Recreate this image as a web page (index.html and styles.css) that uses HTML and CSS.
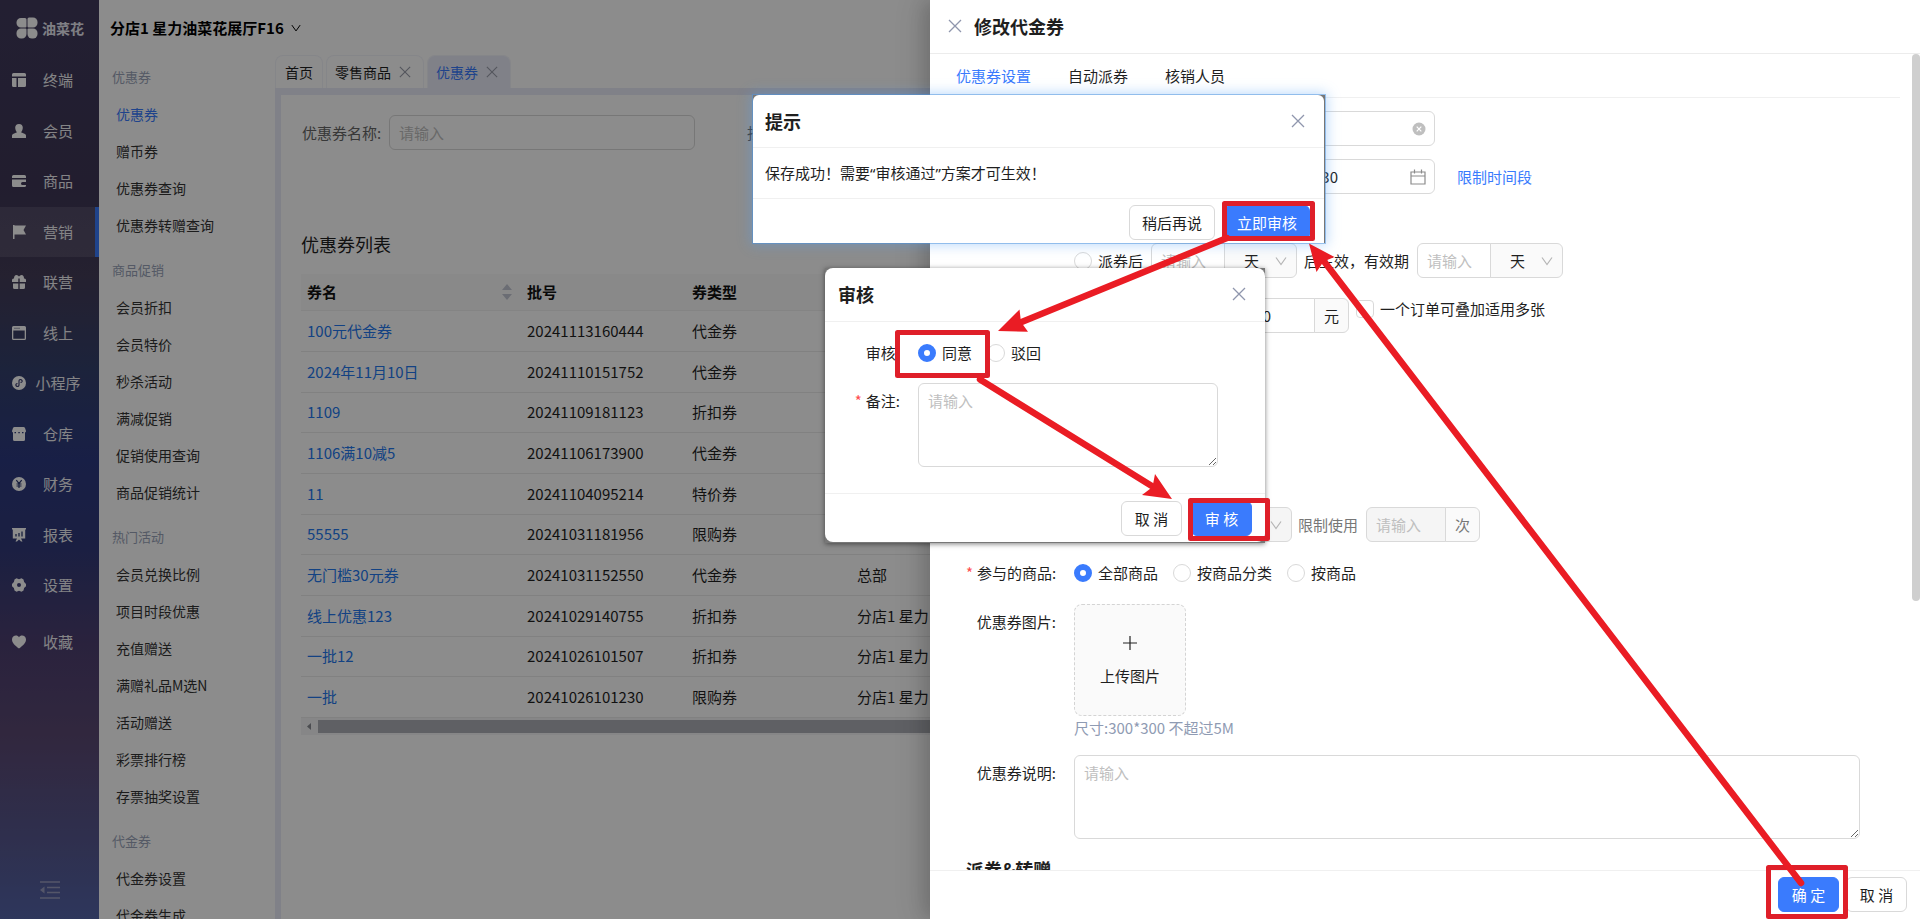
FILE: index.html
```html
<!DOCTYPE html>
<html lang="zh-CN">
<head>
<meta charset="utf-8">
<title>优惠券</title>
<link rel="stylesheet" href="styles.css">
</head>
<body>
<svg class="defs" aria-hidden="true">
  <symbol id="close" viewBox="0 0 14 14"><path d="M1 1l12 12M13 1L1 13" fill="none" stroke="currentColor" stroke-width="1.3"/></symbol>
  <symbol id="down" viewBox="0 0 12 12"><path d="M1 2.500l5 7 5-7" fill="none" stroke="currentColor" stroke-width="1.2"/></symbol>
</svg>
<div class="app">
  <aside class="sidebar">
    <div class="logo">
      <svg width="22" height="22" viewBox="0 0 22 22" fill="#fff"><path d="M5 1h4q1.500 0 1.500 1.500V9.500q0 1-1 1H5a4.500 4.500 0 0 1-4.500-4.500v-.5A4.500 4.500 0 0 1 5 1z"/><path d="M13 .5h4A4.500 4.500 0 0 1 21.500 5v1a4.500 4.500 0 0 1-4.500 4.500h-4.500q-1 0-1-1V2q0-1.500 1.500-1.500z"/><path d="M5 11.500h4.500q1 0 1 1V17a4.500 4.500 0 0 1-4.500 4.500H5A4.500 4.500 0 0 1 .5 17v-1A4.500 4.500 0 0 1 5 11.500z"/><path d="M12.500 11.500H17a4.500 4.500 0 0 1 4.500 4.500v1a4.500 4.500 0 0 1-4.500 4.500h-1a4.500 4.500 0 0 1-4.500-4.500v-4.500q0-1 1-1z"/></svg>
      <span>油菜花</span>
    </div>
    <nav class="nav">
      <a href="#"><svg viewBox="0 0 14 14"><path d="M1.500 0h11Q14 0 14 1.500V3.500H0V1.500Q0 0 1.500 0zM0 5h4.500v9h-3Q0 14 0 12.500zM6 5h8v7.500q0 1.500-1.500 1.500H6z"/></svg><span>终端</span></a>
      <a href="#"><svg viewBox="0 0 14 14"><path d="M7 0a3.800 3.800 0 0 1 3.800 3.800C10.800 6 9.500 8 9 8.300L13 10q1 .5 1 1.500V14H0v-2.500q0-1 1-1.500l4-1.700C4.500 8 3.200 6 3.200 3.800A3.800 3.800 0 0 1 7 0z"/></svg><span>会员</span></a>
      <a href="#"><svg viewBox="0 0 14 14"><path d="M1.500 1h11Q14 1 14 2.500V4H0V2.500Q0 1 1.500 1zM0 5.500h14V8h-3.500a1.500 1.500 0 0 0 0 3H14v.5q0 1.500-1.500 1.500h-11Q0 13 0 11.500z"/></svg><span>商品</span></a>
      <a href="#" class="on"><svg viewBox="0 0 14 14"><path d="M1 0h1.500v.5H14L11.500 5 14 9.500H2.500V14H1z"/></svg><span>营销</span></a>
      <a href="#"><svg viewBox="0 0 14 14"><path d="M6.300 3.500V7H0V5q0-1.500 1.500-1.500H2Q2 0 4.500 0 6 0 7 1.500 8 0 9.500 0 12 0 12 3.500h.5Q14 3.500 14 5v2H7.700V3.500zM1 8.500h5.300V14H2.500Q1 14 1 12.500zM7.700 8.500H13v4q0 1.500-1.500 1.500H7.700z"/></svg><span>联营</span></a>
      <a href="#"><svg viewBox="0 0 14 14"><path fill-rule="evenodd" d="M1.500 0h11Q14 0 14 1.500v11q0 1.500-1.500 1.500h-11Q0 14 0 12.500v-11Q0 0 1.500 0zM1.300 4.500v8.200h11.400V4.500zM2.500 1.700v1h1v-1zM4.500 1.700v1h1v-1zM6.500 1.700v1h1v-1z"/></svg><span>线上</span></a>
      <a href="#"><svg viewBox="0 0 14 14"><circle cx="7" cy="7" r="7"/><path d="M7 8.800c0 3-4 1.500-3-.5.400-.7 1.500-.8 1.500-.8M7 8.800V5.200c0-3 4-1.500 3 .5-.4.700-1.500.8-1.500.8" fill="none" stroke="#3e4070" stroke-width="1.200"/></svg><span>小程序</span></a>
      <a href="#"><svg viewBox="0 0 14 14"><path fill-rule="evenodd" d="M2.500 0h9Q12.500 0 13 1l1 3q0 1-1 1.500v7q0 1.500-1.500 1.500h-9Q1 14 1 12.500v-7Q0 5 0 4l1-3Q1.500 0 2.500 0zM2.500 5v1.200H4V5zM6.300 5v1.200h1.500V5zM10 5v1.200h1.500V5z"/></svg><span>仓库</span></a>
      <a href="#"><svg viewBox="0 0 14 14"><circle cx="7" cy="7" r="7"/><path d="M4.300 3.200L7 6.500l2.700-3.300M7 6.500V11M4.500 7h5M4.500 9h5" fill="none" stroke="#2c3a72" stroke-width="1.200"/></svg><span>财务</span></a>
      <a href="#"><svg viewBox="0 0 14 14"><path d="M0 0h14v1.500h-.8V10.500H9l1.500 3H9L7 11.500 5 13.500H3.500l1.500-3H.8V1.500H0z"/><path d="M4 8.500V6M7 8.500V5M10 8.500V3.500" stroke="#2c3a72" stroke-width="1.300"/></svg><span>报表</span></a>
      <a href="#"><svg viewBox="0 0 14 14"><path fill-rule="evenodd" d="M4.500.3L7 1.200 9.500.3l2 1.200.6 2.500L14 6v2.200l-1.900 1.800-.6 2.500-2 1.200L7 12.800l-2.500.9-2-1.200L1.900 10 0 8.200V6l1.900-2 .6-2.500zM7 5a2 2 0 1 0 0 4 2 2 0 0 0 0-4z"/></svg><span>设置</span></a>
      <a href="#" class="fav"><svg viewBox="0 0 14 14"><path d="M7 13.500C3 10.500 0 8 0 4.500 0 0 5.500-.8 7 2.200 8.500-.8 14 0 14 4.500 14 8 11 10.500 7 13.500z"/></svg><span>收藏</span></a>
    </nav>
    <button class="fold" aria-label="收起菜单"><svg width="20" height="18" viewBox="0 0 20 18"><path d="M0 1h20M7 6.500h13M7 11.500h13M0 17h20" stroke="currentColor" stroke-width="1.500"/><path d="M4.500 5.500v7L0 9z" fill="currentColor"/></svg></button>
  </aside>
  <div class="main">
    <header class="topbar"><button class="store">分店1 星力油菜花展厅F16 <svg width="10" height="10"><use href="#down"/></svg></button></header>
    <div class="work">
      <nav class="submenu">
        <h3>优惠券</h3>
        <a href="#" class="on">优惠券</a><a href="#">赠币券</a><a href="#">优惠券查询</a><a href="#">优惠券转赠查询</a>
        <h3>商品促销</h3>
        <a href="#">会员折扣</a><a href="#">会员特价</a><a href="#">秒杀活动</a><a href="#">满减促销</a><a href="#">促销使用查询</a><a href="#">商品促销统计</a>
        <h3>热门活动</h3>
        <a href="#">会员兑换比例</a><a href="#">项目时段优惠</a><a href="#">充值赠送</a><a href="#">满赠礼品M选N</a><a href="#">活动赠送</a><a href="#">彩票排行榜</a><a href="#">存票抽奖设置</a>
        <h3>代金券</h3>
        <a href="#">代金券设置</a><a href="#">代金券生成</a>
      </nav>
      <div class="content">
        <div class="pagetabs">
          <span class="ptab">首页</span>
          <span class="ptab">零售商品<svg width="12" height="12"><use href="#close"/></svg></span>
          <span class="ptab on">优惠券<svg width="12" height="12"><use href="#close"/></svg></span>
        </div>
        <section class="card">
          <form class="search">
            <label for="q-name">优惠券名称:</label><input id="q-name" class="input" placeholder="请输入">
            <label for="q-batch" class="second">批号:</label>
          </form>
          <h2>优惠券列表</h2>
          <div class="tablebox">
            <table>
              <thead><tr><th class="c1"><div class="sorthead">券名<svg width="10" height="16" viewBox="0 0 10 16" fill="#c3c7d3"><path d="M5 0l5 6H0zM5 16l5-6H0z"/></svg></div></th><th class="c2">批号</th><th class="c2">券类型</th><th></th></tr></thead>
              <tbody>
                <tr><td><a href="#">100元代金券</a></td><td>20241113160444</td><td>代金券</td><td></td></tr>
                <tr><td><a href="#">2024年11月10日</a></td><td>20241110151752</td><td>代金券</td><td></td></tr>
                <tr><td><a href="#">1109</a></td><td>20241109181123</td><td>折扣券</td><td></td></tr>
                <tr><td><a href="#">1106满10减5</a></td><td>20241106173900</td><td>代金券</td><td></td></tr>
                <tr><td><a href="#">11</a></td><td>20241104095214</td><td>特价券</td><td></td></tr>
                <tr><td><a href="#">55555</a></td><td>20241031181956</td><td>限购券</td><td></td></tr>
                <tr><td><a href="#">无门槛30元券</a></td><td>20241031152550</td><td>代金券</td><td>总部</td></tr>
                <tr><td><a href="#">线上优惠123</a></td><td>20241029140755</td><td>折扣券</td><td>分店1 星力</td></tr>
                <tr><td><a href="#">一批12</a></td><td>20241026101507</td><td>折扣券</td><td>分店1 星力</td></tr>
                <tr><td><a href="#">一批</a></td><td>20241026101230</td><td>限购券</td><td>分店1 星力</td></tr>
              </tbody>
            </table>
            <div class="hscroll"><svg width="17" height="17" viewBox="0 0 17 17"><path d="M10 5v7L6 8.500z" fill="#8a8d94"/></svg><div class="hthumb"></div></div>
          </div>
        </section>
      </div>
    </div>
  </div>
</div>
<div class="mask"></div>

<section class="drawer">
  <header class="dhead"><button class="x" aria-label="关闭"><svg width="14" height="14"><use href="#close"/></svg></button><h1>修改代金券</h1></header>
  <div class="dbody">
    <nav class="dtabs"><a href="#" class="on">优惠券设置</a><a href="#">自动派券</a><a href="#">核销人员</a></nav>
    <form class="form">
      <div class="row"><span></span><div class="ctl"><div class="field w361"><input class="input" aria-label="名称"><svg class="ficon" width="14" height="14" viewBox="0 0 14 14"><circle cx="7" cy="7" r="6.500" fill="#bfbfbf"/><path d="M4.700 4.700l4.600 4.600M9.300 4.700L4.700 9.300" stroke="#fff" stroke-width="1.200"/></svg></div></div></div>
      <div class="row"><span></span><div class="ctl"><div class="field w361"><input class="input date" aria-label="结束日期" value="30"><svg class="ficon" width="16" height="16" viewBox="0 0 16 16" fill="none" stroke="#8c8c8c" stroke-width="1.200"><path d="M1 3h14v12H1zM1 7h14M4.500 .5v4M11.500 .5v4"/></svg></div><a href="#" class="limit">限制时间段</a></div></div>
      <div class="row r-valid"><span></span><div class="ctl">
        <label class="opt"><input type="radio" name="valid">派券后</label>
        <div class="combo"><input class="input w74" placeholder="请输入" aria-label="天数"><div class="sel"><select aria-label="单位"><option>天</option></select><svg width="12" height="12"><use href="#down"/></svg></div></div>
        <span class="mid">后生效，有效期</span>
        <div class="combo"><input class="input w74" placeholder="请输入" aria-label="有效期"><div class="sel"><select aria-label="有效期单位"><option>天</option></select><svg width="12" height="12"><use href="#down"/></svg></div></div>
      </div></div>
      <div class="row r-money"><span></span><div class="ctl">
        <div class="combo"><input class="input money" value="0" aria-label="金额"><span class="addon">元</span></div>
        <label class="opt stack"><input type="checkbox">一个订单可叠加适用多张</label>
      </div></div>
      <div class="row r-limit"><span></span><div class="ctl muted">
        <div class="sel wide"><select disabled aria-label="周期"><option></option></select><svg width="12" height="12"><use href="#down"/></svg></div>
        <label for="times">限制使用</label>
        <div class="combo"><input id="times" class="input w80" placeholder="请输入" disabled><span class="addon">次</span></div>
      </div></div>
      <div class="row r-goods"><span class="lab req">参与的商品:</span><div class="ctl radios">
        <label class="opt"><input type="radio" name="goods" checked>全部商品</label>
        <label class="opt"><input type="radio" name="goods">按商品分类</label>
        <label class="opt"><input type="radio" name="goods">按商品</label>
      </div></div>
      <div class="row"><span class="lab">优惠券图片:</span><div>
        <button type="button" class="upload"><svg width="14" height="14" viewBox="0 0 14 14"><path d="M7 0v14M0 7h14" stroke="#222" stroke-width="1.200"/></svg>上传图片</button>
        <p class="hint">尺寸:300*300 不超过5M</p>
      </div></div>
      <div class="row"><label class="lab" for="desc">优惠券说明:</label><textarea id="desc" placeholder="请输入"></textarea></div>
      <h2 class="sect">派券&amp;转赠</h2>
    </form>
    <div class="vthumb"></div>
  </div>
  <footer class="dfoot"><button class="btn primary">确 定</button><button class="btn">取 消</button></footer>
</section>

<section class="modal notice" role="dialog" aria-labelledby="t1">
  <div class="panel">
    <header class="mhead"><h2 id="t1">提示</h2><button class="x" aria-label="关闭"><svg width="14" height="14"><use href="#close"/></svg></button></header>
    <p class="msg">保存成功！需要“审核通过”方案才可生效！</p>
    <footer class="mfoot"><button class="btn">稍后再说</button><button class="btn primary">立即审核</button></footer>
  </div>
</section>

<section class="modal audit" role="dialog" aria-labelledby="t2">
  <div class="panel">
    <header class="mhead"><h2 id="t2">审核</h2><button class="x" aria-label="关闭"><svg width="14" height="14"><use href="#close"/></svg></button></header>
    <form class="mbody">
      <span class="lab">审核:</span><div class="ctl radios">
        <label class="opt"><input type="radio" name="audit" checked>同意</label>
        <label class="opt"><input type="radio" name="audit">驳回</label>
      </div>
      <label class="lab req" for="remark">备注:</label><textarea id="remark" placeholder="请输入"></textarea>
    </form>
    <footer class="mfoot"><button class="btn">取 消</button><button class="btn primary">审 核</button></footer>
  </div>
</section>

<svg class="marks" width="1920" height="919" aria-hidden="true">
  <g fill="none" stroke="#df1f29" stroke-width="5" stroke-linejoin="round">
    <path d="M1224.500 203.500h88v35h-88z"/><path d="M897.500 332.500h90v43h-90z"/><path d="M1190.500 500.500h77v38h-77z"/><path d="M1768.500 867.500h77v49h-77z"/>
  </g>
  <g fill="none" stroke="#ea1c24" stroke-width="6.500" stroke-linecap="round">
    <path d="M1227 238L1018 323.500"/><path d="M980 379.500L1155 488"/><path d="M1801 883L1323 260"/>
  </g>
  <g fill="#ea1c24"><path d="M998 331l21.500-21.500 1.500 12.500 7 9.700z"/><path d="M1172 499l-17-25-2.500 13-10.500 8z"/><path d="M1309 243.500l25.500 13.500-11 4.500-7 10.500z"/></g>
</svg>
</body>
</html>
```
FILE: styles.css
```css
* { box-sizing: border-box; margin: 0; }
html, body { height: 100%; overflow: hidden; }
body { position: relative; font: 15px/24px "Noto Sans CJK SC", sans-serif; color: #1f1f1f; background: #fff; }
a { color: inherit; text-decoration: none; }
button, input, textarea, select { font: inherit; color: inherit; }
button { border: 0; padding: 0; background: none; }
svg { display: block; flex: none; }
.defs { position: absolute; width: 0; height: 0; }

.app { display: flex; height: 100%; }
.sidebar { width: 99px; flex: none; display: flex; flex-direction: column; color: #f0f0f4;
  background: linear-gradient(180deg, #403a5c 0%, #3e3656 20%, #443c58 30%, #34406c 40%, #2d3a80 50%, #323a78 60%, #4d3f70 70%, #5a4872 80%, #565890 92%, #5464a8 100%); }
.logo { display: flex; align-items: center; gap: 4px; height: 55px; padding-left: 16px; font-size: 14px; font-weight: 700; }
.logo span { color: #e8e8f2; }
.nav { display: flex; flex-direction: column; justify-content: space-between; height: 612px; }
.nav a { display: flex; align-items: center; gap: 9px; height: 50px; padding-left: 12px; }
.nav svg { width: 14px; height: 14px; fill: #fff; }
.nav span { width: 46px; text-align: center; white-space: nowrap; }
.nav .on { background: rgba(255,255,255,.1); border-right: 4px solid #3a7bfd; }
.nav .fav { margin-top: 6px; }
.fold { margin: auto auto 20px; color: #9a9dc0; }

.main { flex: 1; min-width: 0; display: flex; flex-direction: column; }
.topbar { height: 55px; display: flex; align-items: center; padding-left: 11px; }
.store { display: flex; align-items: center; gap: 7px; font-weight: 700; color: #000; }
.work { flex: 1; min-height: 0; display: flex; }
.submenu { width: 176px; flex: none; padding-top: 4px; overflow: hidden; font-size: 14px; line-height: 37px; color: #333; }
.submenu h3 { padding: 0 0 2px 13px; font-size: 13px; line-height: 35px; font-weight: 400; color: #99a3b8; }
.submenu a { display: block; padding-left: 17px; }
.submenu a + h3 { margin-top: 8px; }
.submenu .on { color: #3a7bfd; }

.content { flex: 1; min-width: 0; display: flex; flex-direction: column; }
.pagetabs { display: flex; gap: 3px; height: 33px; }
.ptab { display: flex; align-items: center; gap: 8px; padding: 0 12px 0 8px; font-size: 14px; border: 1px solid #f3f4fa; border-bottom: 0; border-radius: 8px 8px 0 0; }
.ptab svg { color: #9a9dab; }
.ptab:first-child { padding: 0 9px; }
.ptab.on { background: #eaecf8; color: #3a7bfd; }
.card { flex: 1; border: solid #eaecf8; border-width: 7px 0 0 6px; padding: 20px 0 0 20px; }
.search { display: flex; align-items: center; color: #666; }
.search label { width: 88px; padding-left: 1px; white-space: nowrap; flex: none; }
.search .second { margin-left: 51px; width: 50px; }
.search .input { width: 306px; }
.input { height: 35px; border: 1px solid #d9d9d9; border-radius: 6px; padding: 0 9px; background: #fff; outline: 0; }
::placeholder { color: #bfbfbf; opacity: 1; }
.card h2 { margin-top: 80px; font-size: 18px; line-height: 28px; font-weight: 400; }
.tablebox { margin-top: 16px; }
table { width: 100%; border-collapse: collapse; table-layout: fixed; }
th { height: 36px; padding: 0 6px; text-align: left; background: #fafafa; border-bottom: 1px solid #f0f0f0; color: #111; }
td { height: 41px; padding: 0 6px; border-bottom: 1px solid #ebebeb; white-space: nowrap; }
tr:nth-child(3n) td { height: 40px; }
.c1 { width: 220px; }
.c2 { width: 165px; }
.sorthead { display: flex; justify-content: space-between; align-items: center; padding-right: 3px; }
td a { color: #2478ee; }
.hscroll { display: flex; align-items: center; height: 17px; background: #f4f4f6; }
.hthumb { flex: 1; height: 13px; background: #adb0b6; }

.mask { position: absolute; inset: 0; background: rgba(0,0,0,.45); }

.drawer { position: absolute; top: 0; right: 0; bottom: 0; width: 990px; display: flex; flex-direction: column; background: #fff; box-shadow: -6px 0 16px rgba(0,0,0,.12), -9px 0 28px rgba(0,0,0,.1); }
.dhead { display: flex; align-items: center; gap: 12px; height: 54px; padding: 0 0 1px 18px; border-bottom: 1px solid #ececec; }
.dhead h1 { font-size: 18px; }
.x { color: #8f96ad; }
.dbody { position: relative; flex: 1; min-height: 0; overflow: hidden; }
.dtabs { display: flex; gap: 37px; height: 44px; margin-right: 20px; padding-left: 26px; line-height: 44px; border-bottom: 1px solid #f0f0f0; }
.dtabs .on { color: #3a7bfd; }
.form { display: flex; flex-direction: column; gap: 13px; padding: 13px 60px 0 36px; }
.row { display: grid; grid-template-columns: 94px 1fr; column-gap: 14px; align-items: start; }
.lab { padding-right: 4px; line-height: 35px; text-align: right; white-space: nowrap; }
.req::before { content: "*"; color: #ff4d4f; margin-right: 4px; }
.ctl { display: flex; align-items: center; height: 35px; white-space: nowrap; }
.field { position: relative; display: flex; }
.w361 { width: 361px; }
.field .input { width: 100%; }
.field .date { text-align: right; padding-right: 96px; }
.ficon { position: absolute; right: 9px; top: 50%; translate: 0 -50%; }
.limit { margin-left: 22px; color: #3a7bfd; }
.r-valid { margin-top: 36px; }
.r-money { margin-top: 7px; }
.r-limit { margin-top: 161px; }
.opt { display: flex; align-items: center; gap: 6px; }
input[type=radio], input[type=checkbox] { appearance: none; width: 18px; height: 18px; margin: 0; border: 1px solid #d9d9d9; border-radius: 50%; background: #fff; }
input[type=checkbox] { border-radius: 4px; }
input[type=radio]:checked { border: 6px solid #3a7bfd; }
.combo { display: flex; margin-left: 8px; }
.combo .input { border-radius: 6px 0 0 6px; }
.w74 { width: 74px; }
.w80 { width: 80px; }
.sel { position: relative; width: 73px; height: 35px; margin-left: -1px; }
.sel select { appearance: none; width: 100%; height: 100%; padding: 0 0 0 19px; border: 1px solid #d9d9d9; border-radius: 0 6px 6px 0; background: #fafafa; opacity: 1; }
.sel svg { position: absolute; right: 10px; top: 12px; color: #b5b5b5; }
.mid { margin: 0 0 0 7px; }
.r-money .combo { margin-left: 0; }
.money { width: 241px; text-align: right; padding-right: 43px; }
.addon { display: flex; align-items: center; justify-content: center; width: 35px; height: 35px; margin-left: -1px; border: 1px solid #d9d9d9; border-radius: 0 6px 6px 0; background: #fafafa; }
.stack { margin: -14px 0 0 7px; }
.muted { color: #777; }
.muted .wide { width: 218px; margin: 0 6px 0 0; }
.muted select, .muted .input { background: #f5f5f5; }
.muted .wide select { border-radius: 6px; }
.r-goods { margin-bottom: 1px; }
.radios { gap: 15px; }
.upload { display: flex; flex-direction: column; align-items: center; justify-content: center; gap: 14px; width: 112px; height: 112px; padding-top: 4px; border: 1px dashed #d4d4d4; border-radius: 8px; background: #fafafa; }
.hint { color: #8f9bb3; line-height: 24px; padding-bottom: 2px; }
textarea { display: block; width: 100%; height: 84px; padding: 5px 9px; border: 1px solid #d9d9d9; border-radius: 6px; background: #fff; resize: both; outline: 0; }
.sect { margin-top: 5px; font-size: 18px; line-height: 24px; }
.vthumb { position: absolute; top: 0; right: 0; width: 8px; height: 67%; border-radius: 4px; background: #cfcfcf; }
.dfoot { display: flex; justify-content: flex-end; gap: 7px; height: 49px; padding: 6px 13px 0 0; border-top: 1px solid #f0f0f0; background: #fff; }
.btn { width: 61px; height: 35px; border: 1px solid #d9d9d9; border-radius: 6px; background: #fff; white-space: nowrap; }
.primary { border-color: #3a7bfd; background: #3a7bfd; color: #fff; }

.modal { position: absolute; background: #777; }
.panel { background: #fff; }
.mhead { display: flex; align-items: center; justify-content: space-between; height: 53px; padding: 0 19px 1px 12px; border-bottom: 1px solid #f0f0f0; }
.mhead h2 { font-size: 18px; }
.mfoot { display: flex; justify-content: flex-end; border-top: 1px solid #f0f0f0; }
.notice { left: 753px; top: 95px; width: 572px; padding-right: 1px; box-shadow: 0 0 0 1px rgba(75,145,220,.5), 0 0 12px 2px rgba(85,160,245,.4); }
.notice .panel { border-radius: 6px 6px 0 0; }
.msg { line-height: 50px; padding-left: 12px; font-family: "Noto Sans", "Noto Sans CJK SC", sans-serif; }
.notice .mfoot { gap: 9px; height: 45px; padding: 6px 14px 0 0; }
.notice .btn { width: 86px; }
.audit { left: 825px; top: 268px; width: 440px; padding-bottom: 1px; box-shadow: 0 1px 5px rgba(0,0,0,.5); }
.audit .panel { border-radius: 8px; }
.audit .mhead { height: 54px; padding: 0 19px 1px 13px; }
.mbody { display: grid; grid-template-columns: 66px 300px; column-gap: 14px; row-gap: 13px; padding: 13px 0 26px 13px; }
.audit .mfoot { gap: 9px; height: 49px; padding: 7px 13px 0 0; }

.marks { position: absolute; left: 0; top: 0; pointer-events: none; }
```
